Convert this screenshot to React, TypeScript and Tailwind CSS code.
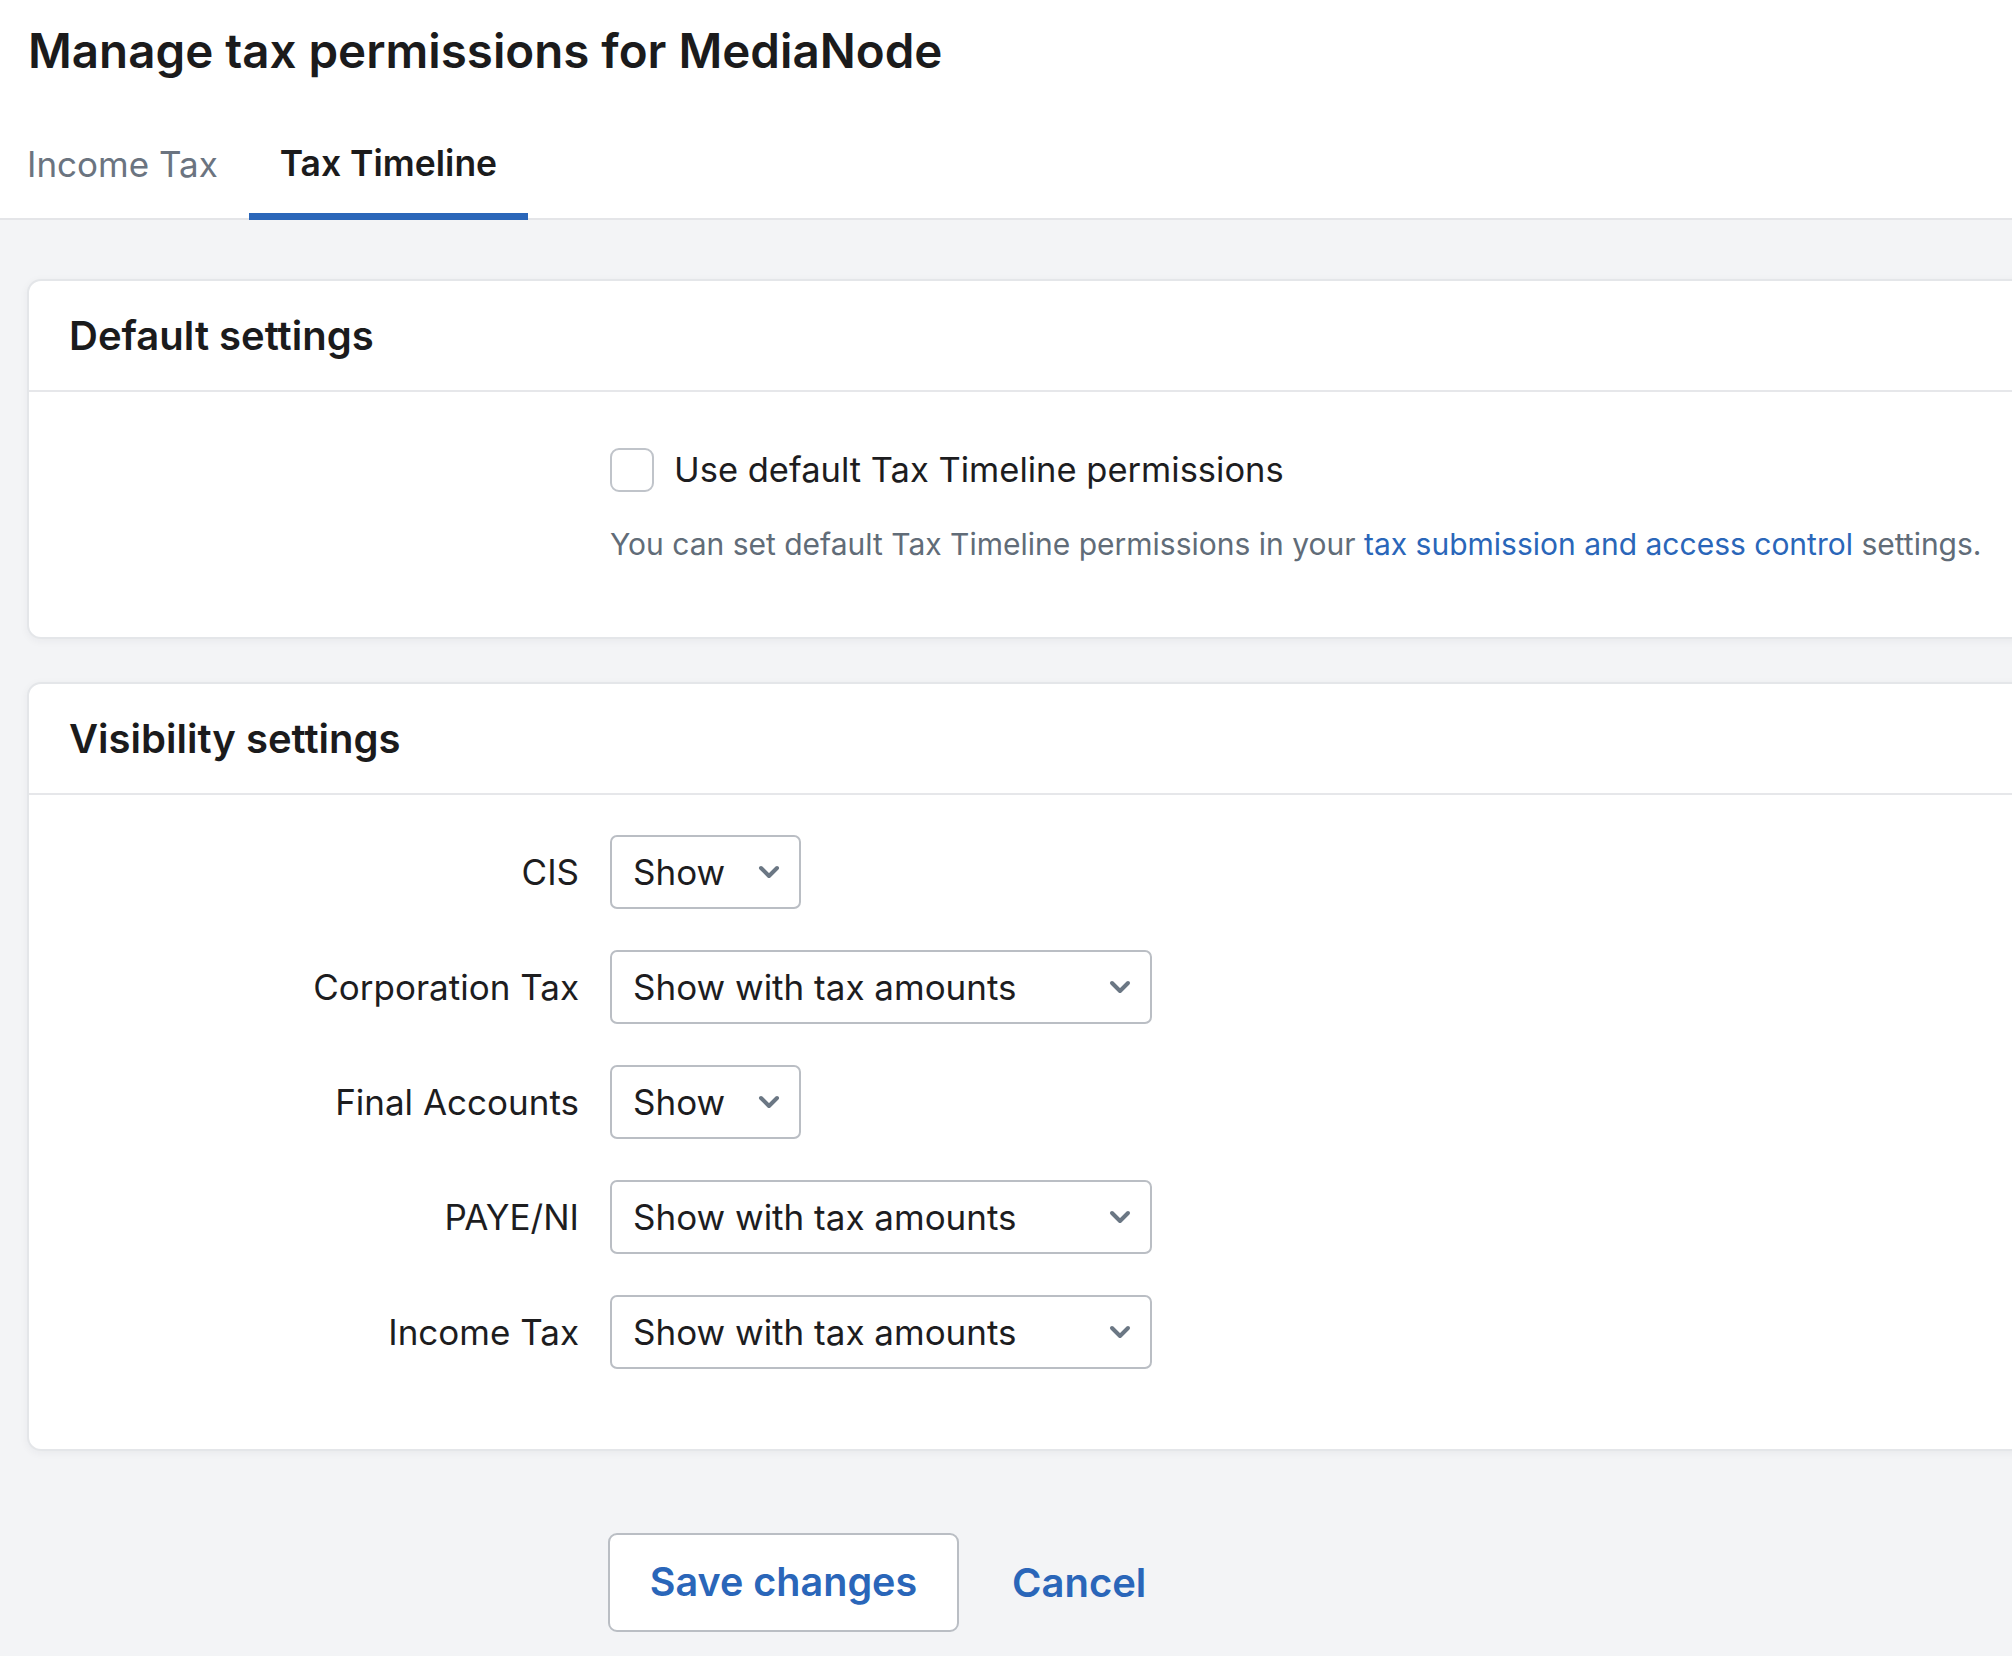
import { useState } from "react";

const ROWS: { label: string; value: string; wide: boolean }[] = [
  { label: "CIS", value: "Show", wide: false },
  { label: "Corporation Tax", value: "Show with tax amounts", wide: true },
  { label: "Final Accounts", value: "Show", wide: false },
  { label: "PAYE/NI", value: "Show with tax amounts", wide: true },
  { label: "Income Tax", value: "Show with tax amounts", wide: true },
];

function Chevron() {
  return (
    <svg width="22" height="14" viewBox="0 0 22 14" fill="none" className="shrink-0">
      <polyline
        points="3,3 11,11 19,3"
        stroke="#6b7784"
        strokeWidth="4"
        strokeLinecap="round"
        strokeLinejoin="round"
      />
    </svg>
  );
}

function FakeSelect({ value, wide }: { value: string; wide: boolean }) {
  return (
    <div
      className={
        "flex h-[74px] items-center justify-between rounded-[7px] border-2 border-[#babec4] bg-white pl-[21px] pr-[19px] text-[35px] leading-[48px] text-[#1d1d1f] " +
        (wide ? "w-[542px]" : "w-[191px]")
      }
    >
      <span>{value}</span>
      <Chevron />
    </div>
  );
}

function Card({ title, children }: { title: string; children: React.ReactNode }) {
  return (
    <section className="-mr-[40px] rounded-[14px] border-2 border-[#e4e6e9] bg-white shadow-[0_2px_8px_rgba(30,40,60,0.05)]">
      <div className="flex h-[111px] items-center border-b-2 border-[#e6e7ea] pl-[40px]">
        <h2 className="text-[40px] font-semibold leading-[52px] text-[#1b1b1c]">{title}</h2>
      </div>
      {children}
    </section>
  );
}

export default function App() {
  const [tab, setTab] = useState("timeline");
  const [useDefault, setUseDefault] = useState(false);

  return (
    <div
      className="min-h-screen overflow-hidden bg-[#f3f4f6]"
      style={{ fontFamily: "Inter, 'Noto Sans', sans-serif" }}
    >
      <header className="border-b-2 border-[#e4e5e8] bg-white">
        <h1 className="pl-[28px] pt-[18px] text-[47.5px] font-semibold leading-[66px] text-[#1b1b1c]">
          Manage tax permissions for MediaNode
        </h1>
        <nav className="mt-[38px] flex">
          <button
            onClick={() => setTab("income")}
            className={
              "-mb-[2px] border-b-[7px] pb-[26px] pl-[27px] pr-[31px] pt-[19px] text-[35px] leading-[46px] " +
              (tab === "income"
                ? "border-[#2a66b9] font-semibold text-[#1b1b1c]"
                : "border-transparent text-[#6b7480]")
            }
          >
            Income Tax
          </button>
          <button
            onClick={() => setTab("timeline")}
            className={
              "-mb-[2px] border-b-[7px] px-[31px] pb-[26px] pt-[19px] text-[35.5px] leading-[46px] " +
              (tab === "timeline"
                ? "border-[#2a66b9] font-semibold text-[#1b1b1c]"
                : "border-transparent text-[#6b7480]")
            }
          >
            Tax Timeline
          </button>
        </nav>
      </header>

      <main className="flex flex-col gap-[43px] pl-[27px] pt-[59px]">
        <Card title="Default settings">
          <div className="pb-[72px] pl-[581px] pt-[56px]">
            <label className="flex cursor-pointer items-center gap-[20px]">
              <input
                type="checkbox"
                checked={useDefault}
                onChange={(e) => setUseDefault(e.target.checked)}
                className="h-[44px] w-[44px] appearance-none rounded-[9px] border-2 border-[#c0c4ca] bg-white checked:bg-[#2a66b9]"
              />
              <span className="text-[34.5px] leading-[44px] text-[#1d1d1f]">
                Use default Tax Timeline permissions
              </span>
            </label>
            <p className="mt-[31px] text-[30px] leading-[42px] text-[#616c78]">
              You can set default Tax Timeline permissions in your{" "}
              <a href="#" className="text-[#2a66b9]">
                tax submission and access control
              </a>{" "}
              settings.
            </p>
          </div>
        </Card>

        <Card title="Visibility settings">
          <div className="flex flex-col gap-[41px] pb-[80px] pt-[40px]">
            {ROWS.map((r) => (
              <div key={r.label} className="flex items-center gap-[31px]">
                <span className="w-[550px] text-right text-[35px] leading-[48px] text-[#1d1d1f]">
                  {r.label}
                </span>
                <FakeSelect value={r.value} wide={r.wide} />
              </div>
            ))}
          </div>
        </Card>

        <div className="flex items-center gap-[53px] pl-[581px] pt-[39px]">
          <button className="h-[99px] w-[351px] rounded-[9px] border-2 border-[#babec4] bg-white text-[39.5px] font-semibold text-[#2a66b9]">
            Save changes
          </button>
          <button className="text-[40px] font-semibold text-[#2a66b9]">Cancel</button>
        </div>
      </main>
    </div>
  );
}
